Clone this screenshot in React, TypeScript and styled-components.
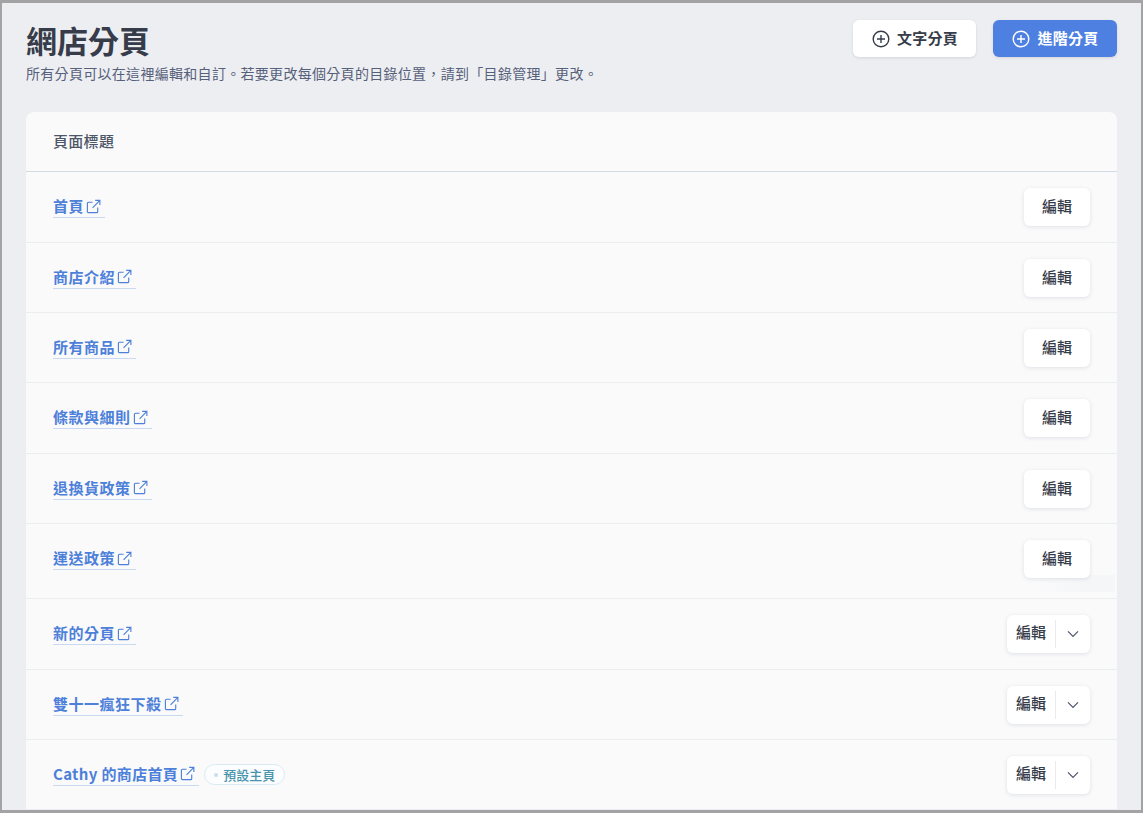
import React from "react";
import styled, { createGlobalStyle } from "styled-components";

const Global = createGlobalStyle`
  html, body { margin: 0; padding: 0; background: #edeef1; }
  * { box-sizing: border-box; }
  body { font-family: "Noto Sans CJK TC", "Noto Sans", sans-serif; }
`;

const Frame = styled.div`
  width: 1143px;
  height: 813px;
  overflow: hidden;
  background: #edeef1;
  border-style: solid;
  border-color: #a3a3a5;
  border-width: 3px 2px 3px 2px;
  padding: 0 24px 0 24px;
`;

const Header = styled.header`
  display: flex;
  justify-content: space-between;
  align-items: flex-start;
  height: 109px;
  padding-top: 17px;
`;

const TitleBlock = styled.div`
  display: flex;
  flex-direction: column;
`;

const Title = styled.h1`
  margin: 0;
  font-size: 31px;
  line-height: 40px;
  letter-spacing: 0;
  font-weight: 700;
  color: #363c4a;
`;

const Subtitle = styled.p`
  margin: 0;
  font-size: 14px;
  line-height: 20px;
  letter-spacing: 0.3px;
  color: #56607a;
  margin-top: 3px;
`;

const Actions = styled.div`
  display: flex;
  gap: 17px;
`;

const TopButton = styled.button<{ $primary?: boolean }>`
  display: flex;
  align-items: center;
  justify-content: center;
  gap: 7px;
  height: 37px;
  width: ${(p) => (p.$primary ? "124px" : "123px")};
  border: none;
  border-radius: 6px;
  padding: 0 0 3px 1px;
  font: 700 15px "Noto Sans CJK TC", sans-serif;
  letter-spacing: 0.3px;
  color: ${(p) => (p.$primary ? "#ffffff" : "#363c4a")};
  background: ${(p) => (p.$primary ? "#4e80e2" : "#ffffff")};
  box-shadow: 0 1px 3px rgba(60, 70, 100, 0.14);
  svg { margin-top: 3px; }
`;

const Card = styled.section`
  background: #fafafb;
  border-radius: 8px 8px 0 0;
  position: relative;
`;

const HeadRow = styled.div`
  display: flex;
  align-items: center;
  height: 60.2px;
  padding: 0 27px 3px;
  border-bottom: 1px solid #d4dae3;
  font-size: 15px;
  letter-spacing: 0.3px;
  font-weight: 500;
  color: #4d5669;
`;

const Row = styled.div<{ $tall?: boolean }>`
  display: flex;
  align-items: flex-start;
  justify-content: space-between;
  height: ${(p) => (p.$tall ? "75px" : "70.4px")};
  padding: 16px 27px 0;
  border-bottom: 1px solid #ebedf0;
`;

const Left = styled.div`
  display: flex;
  align-items: center;
  gap: 5px;
  height: 38px;
`;

const PageLink = styled.a<{ $tight?: boolean }>`
  display: flex;
  align-items: center;
  gap: 2px;
  height: 24px;
  padding-right: 4px;
  font-size: 15px;
  letter-spacing: ${(p) => (p.$tight ? "0.35px" : "0.5px")};
  font-weight: 700;
  color: #4d80d9;
  border-bottom: 1px solid #c9d9f2;
  margin-top: -2px;
  svg { margin-top: 1px; }
`;

const Badge = styled.span`
  display: flex;
  align-items: center;
  height: 21px;
  padding: 0 9px;
  gap: 5px;
  border: 1px solid #d9eaf5;
  border-radius: 11px;
  font-size: 13px;
  font-weight: 500;
  color: #4a93ad;
  background: #fbfdfe;
`;

const Dot = styled.i`
  width: 4px;
  height: 4px;
  border-radius: 50%;
  background: #c6deed;
`;

const EditButton = styled.button`
  width: 66px;
  height: 38px;
  border: none;
  border-radius: 6px;
  background: #fff;
  padding: 0 0 3px;
  font: 500 15px "Noto Sans CJK TC", sans-serif;
  color: #363c4a;
  box-shadow: 0 1px 4px rgba(60, 70, 100, 0.14);
  position: relative;
  z-index: 1;
`;

const SplitButton = styled.div`
  display: flex;
  align-items: center;
  width: 83px;
  height: 38px;
  border-radius: 6px;
  background: #fff;
  font-size: 15px;
  font-weight: 500;
  color: #363c4a;
  box-shadow: 0 1px 4px rgba(60, 70, 100, 0.14);
`;

const SplitLabel = styled.span`
  width: 49px;
  height: 28px;
  line-height: 24px;
  text-align: center;
  border-right: 1px solid #e8eaee;
`;

const SplitCaret = styled.span`
  flex: 1;
  display: flex;
  justify-content: center;
  color: #4d5669;
`;

const Glow = styled.div`
  position: absolute;
  left: 1000px;
  top: 463px;
  width: 89px;
  height: 17px;
  background: linear-gradient(100deg, rgba(245,246,248,0) 10%, #f5f6f8 70%);
  pointer-events: none;
`;

const External = () => (
  <svg width="15" height="15" viewBox="0 0 16 16" fill="none" stroke="currentColor" strokeWidth="1.2">
    <path d="M12.5 9v4.5a1 1 0 0 1-1 1h-9a1 1 0 0 1-1-1v-9a1 1 0 0 1 1-1H7" />
    <path d="M7 9.5 14.5 1.8M9.8 1.5h5v5" />
  </svg>
);

const PlusCircle = () => (
  <svg width="18" height="18" viewBox="0 0 18 18" fill="none" stroke="currentColor" strokeWidth="1.4">
    <circle cx="9" cy="9" r="7.8" />
    <path d="M9 5v8M5 9h8" />
  </svg>
);

const Caret = () => (
  <svg width="12" height="8" viewBox="0 0 12 8" fill="none" stroke="currentColor" strokeWidth="1.2">
    <path d="M1 1.3 6 6.3l5-5" />
  </svg>
);

const rows: { name: string; split?: boolean; tall?: boolean; badge?: boolean }[] = [
  { name: "首頁" },
  { name: "商店介紹" },
  { name: "所有商品" },
  { name: "條款與細則" },
  { name: "退換貨政策" },
  { name: "運送政策", tall: true },
  { name: "新的分頁", split: true },
  { name: "雙十一瘋狂下殺", split: true },
  { name: "Cathy 的商店首頁", split: true, badge: true },
];

export default function App() {
  return (
    <Frame>
      <Global />
      <Header>
        <TitleBlock>
          <Title>網店分頁</Title>
          <Subtitle>所有分頁可以在這裡編輯和自訂。若要更改每個分頁的目錄位置，請到「目錄管理」更改。</Subtitle>
        </TitleBlock>
        <Actions>
          <TopButton><PlusCircle />文字分頁</TopButton>
          <TopButton $primary><PlusCircle />進階分頁</TopButton>
        </Actions>
      </Header>
      <Card>
        <HeadRow>頁面標題</HeadRow>
        {rows.map((r) => (
          <Row key={r.name} $tall={r.tall}>
            <Left>
              <PageLink $tight={r.badge}>{r.name}<External /></PageLink>
              {r.badge && <Badge><Dot />預設主頁</Badge>}
            </Left>
            {r.split ? (
              <SplitButton>
                <SplitLabel>編輯</SplitLabel>
                <SplitCaret><Caret /></SplitCaret>
              </SplitButton>
            ) : (
              <EditButton>編輯</EditButton>
            )}
          </Row>
        ))}
        <Glow />
      </Card>
    </Frame>
  );
}
